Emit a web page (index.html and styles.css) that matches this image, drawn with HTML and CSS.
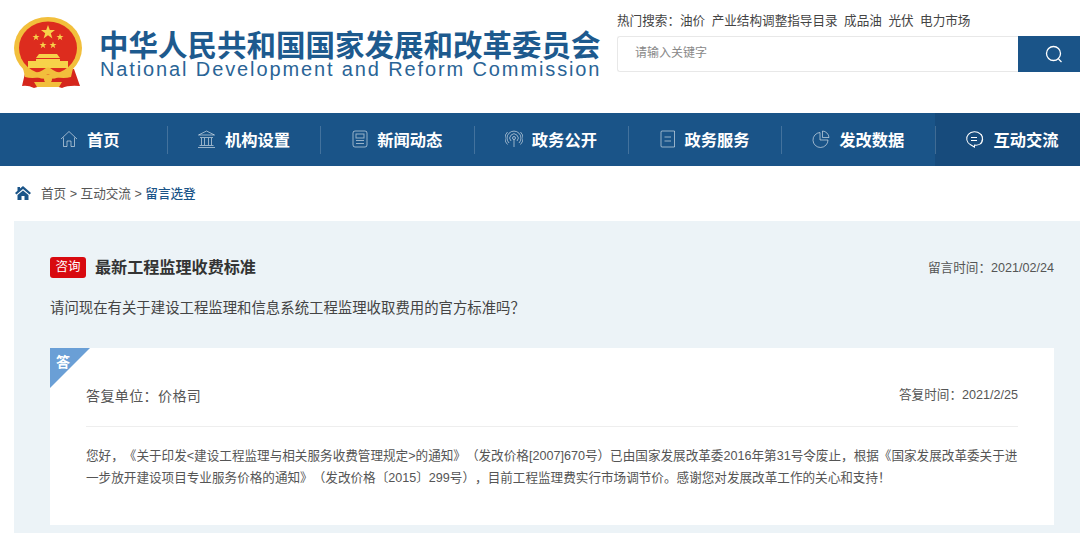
FILE: index.html
```html
<!DOCTYPE html>
<html lang="zh">
<head>
  <meta charset="UTF-8">
  <meta name="viewport" content="width=device-width, initial-scale=1">
  <title>留言选登</title>
  <link rel="stylesheet" href="styles.css">
</head>
<body>

  <!-- Header -->
  <header class="header">
    <div class="logo">
      <svg class="emblem" width="68" height="73" viewBox="0 0 68 73">
        <path d="M12 52 L8 69 Q14 68 20 71 L30 68 L38 68 L48 71 Q54 68 66 69 L60 52 Z" fill="#d5261c"/>
        <ellipse cx="34" cy="31" rx="34" ry="31" fill="#f2bf3c"/>
        <ellipse cx="34" cy="31" rx="29" ry="26.500" fill="#dd2c1e"/>
        <path d="M34 8 L35.800 13 L41 13 L36.800 16.300 L38.400 21.500 L34 18.300 L29.600 21.500 L31.200 16.300 L27 13 L32.200 13 Z" fill="#f7d24a"/>
        <path d="M22 16.500 l.9 2.500 2.600 0 -2.100 1.600 .8 2.600 -2.200 -1.600 -2.200 1.600 .8 -2.600 -2.100 -1.600 2.600 0 Z" fill="#f7d24a"/>
        <path d="M46 16.500 l.9 2.500 2.600 0 -2.100 1.600 .8 2.600 -2.200 -1.600 -2.200 1.600 .8 -2.600 -2.100 -1.600 2.600 0 Z" fill="#f7d24a"/>
        <path d="M29 24.500 l.9 2.500 2.600 0 -2.100 1.600 .8 2.600 -2.200 -1.600 -2.200 1.600 .8 -2.600 -2.100 -1.600 2.600 0 Z" fill="#f7d24a"/>
        <path d="M39 24.500 l.9 2.500 2.600 0 -2.100 1.600 .8 2.600 -2.200 -1.600 -2.200 1.600 .8 -2.600 -2.100 -1.600 2.600 0 Z" fill="#f7d24a"/>
        <path d="M25 37 H43 L46 41 H22 Z M22 42 H46 V44 H54 V51 H14 V44 H22 Z" fill="#f7d24a"/>
        <path d="M8 47 Q20 60 29 53 Q34 48 39 53 Q48 60 60 47 L57 60 Q46 63 34 57 Q22 63 11 60 Z" fill="#f2bf3c"/>
        <path d="M20 65 H48 L45 70 H23 Z" fill="#f2bf3c"/>
        <circle cx="34" cy="62" r="4" fill="#f2bf3c"/>
      </svg>
      <div class="logo-text">
        <div class="logo-cn">中华人民共和国国家发展和改革委员会</div>
        <div class="logo-en">National Development and Reform Commission</div>
      </div>
    </div>
    <div class="search-box">
      <div class="hot-words">
        <span>热门搜索：油价</span>
        <span>产业结构调整指导目录</span>
        <span>成品油</span>
        <span>光伏</span>
        <span>电力市场</span>
      </div>
      <div class="search-row">
        <div class="search-input">请输入关键字</div>
        <div class="search-btn">
          <svg width="18" height="18" viewBox="0 0 18 18" fill="none" stroke="#fff" stroke-width="1.300">
            <circle cx="8.500" cy="8.500" r="7"/>
            <path d="M13.500 14 L16.500 17"/>
          </svg>
        </div>
      </div>
    </div>
  </header>

  <!-- Nav -->
  <nav class="nav">
    <a class="nav-item">
      <svg width="18" height="18" viewBox="0 0 18 18"><path d="M1 9 L9 1.500 L17 9 M3.500 7.500 V16.500 H7 V11 H11 V16.500 H14.500 V7.500"/></svg>
      首页
    </a>
    <a class="nav-item">
      <svg width="19" height="18" viewBox="0 0 19 18"><path d="M9.500 1 L1.500 5 H17.500 Z M3 7.500 H16 M4.500 8 V15 M7.500 8 V15 M11.500 8 V15 M14.500 8 V15 M2.500 15.500 H16.500 M1 17.500 H18"/></svg>
      机构设置
    </a>
    <a class="nav-item">
      <svg width="16" height="18" viewBox="0 0 16 18"><rect x="1" y="1" width="14" height="16" rx="2"/><rect x="4" y="4" width="8" height="4"/><path d="M4 10.500 H12 M4 13.500 H12"/></svg>
      新闻动态
    </a>
    <a class="nav-item">
      <svg width="18" height="18" viewBox="0 0 18 18"><circle cx="9" cy="8" r="1.500"/><path d="M9 9.500 V17 M6 11 A4.200 4.200 0 1 1 12 11 M4 13 A7 7 0 1 1 14 13 M2.500 14.500 A8.800 8.800 0 0 1 2.500 2 M15.500 14.500 A8.800 8.800 0 0 0 15.500 2"/></svg>
      政务公开
    </a>
    <a class="nav-item">
      <svg width="16" height="18" viewBox="0 0 16 18"><path d="M14.500 1 H2 Q1 1 1 2 V16 Q1 17 2 17 H14.500 Z"/><path d="M4.500 7 H11 M4.500 11 H11"/></svg>
      政务服务
    </a>
    <a class="nav-item">
      <svg width="18" height="18" viewBox="0 0 18 18"><path d="M8 2.500 A7.500 7.500 0 1 0 16 10 H8 Z"/><path d="M10.500 1 A7 7 0 0 1 17 7.500 H10.500 Z"/></svg>
      发改数据
    </a>
    <a class="nav-item nav-active">
      <svg width="19" height="18" viewBox="0 0 19 18"><path d="M15 14 A8 7 0 1 0 6 15 L10 17 L10 15 A8 7 0 0 0 15 14 Z" transform="rotate(4 9 9)"/><path d="M6 7.500 H12 M6 10.500 H12 M16 4 Q19 9 15.500 14"/></svg>
      互动交流
    </a>
  </nav>

  <!-- Breadcrumb -->
  <div class="crumb">
    <svg width="16" height="14" viewBox="0 0 16 14">
      <path d="M8 0 L16 7 L14.500 8.500 L8 3 L1.500 8.500 L0 7 L2.500 4.800 V1 H5 V2.600 Z M8 4.500 L13.500 9 V14 H9.500 V10 H6.500 V14 H2.500 V9 Z" fill="#1a5488"/>
    </svg>
    <span>首页 &gt; 互动交流 &gt; </span><span class="crumb-now">留言选登</span>
  </div>

  <!-- Message -->
  <main class="panel">
    <div class="ask-head">
      <span class="badge">咨询</span>
      <h1 class="ask-title">最新工程监理收费标准</h1>
      <span class="ask-date">留言时间：2021/02/24</span>
    </div>
    <p class="ask-body">请问现在有关于建设工程监理和信息系统工程监理收取费用的官方标准吗？</p>

    <section class="answer">
      <div class="corner"></div>
      <span class="corner-text">答</span>
      <div class="answer-head">
        <span class="answer-unit">答复单位：价格司</span>
        <span class="answer-date">答复时间：2021/2/25</span>
      </div>
      <p class="answer-body">您好，《关于印发&lt;建设工程监理与相关服务收费管理规定&gt;的通知》（发改价格[2007]670号）已由国家发展改革委2016年第31号令废止，根据《国家发展改革委关于进一步放开建设项目专业服务价格的通知》（发改价格〔2015〕299号），目前工程监理费实行市场调节价。感谢您对发展改革工作的关心和支持！</p>
    </section>
  </main>

</body>
</html>
```

FILE: styles.css
```css
html, body {
  margin: 0;
  height: 533px;
  overflow: hidden;
}
body {
  font-family: "Liberation Sans", "Noto Sans CJK SC", sans-serif;
  background: #ffffff;
  color: #333;
  width: 1080px;
  text-spacing-trim: space-all;
}

/* HEADER */
.header {
  height: 113px;
  display: flex;
  justify-content: space-between;
}
.logo {
  display: flex;
  padding: 17px 0 0 14px;
}
.emblem {
  flex: none;
}
.logo-text {
  margin-left: 17px;
  padding-top: 14px;
}
.logo-cn {
  font-size: 29.5px;
  line-height: 30px;
  font-weight: bold;
  color: #1d5a8e;
  white-space: nowrap;
}
.logo-en {
  font-size: 20px;
  line-height: 16px;
  letter-spacing: 1.88px;
  padding-left: 1px;
  color: #2a6496;
  white-space: nowrap;
}
.search-box {
  width: 463px;
  padding-top: 13px;
}
.hot-words {
  display: flex;
  gap: 6.500px;
  font-size: 12.6px;
  line-height: 17px;
  color: #444;
  margin-bottom: 6px;
}
.search-row {
  display: flex;
  height: 36px;
}
.search-input {
  flex: 1;
  border: 1px solid #e8e8e8;
  border-right: none;
  border-radius: 3px 0 0 3px;
  padding-left: 17px;
  font-size: 12px;
  line-height: 33px;
  color: #888;
}
.search-btn {
  width: 62px;
  box-sizing: border-box;
  padding-left: 10px;
  background: #1a5488;
  display: flex;
  align-items: center;
  justify-content: center;
}

/* NAV */
.nav {
  height: 53px;
  background: #1a5488;
  display: flex;
  padding-left: 13px;
  overflow: hidden;
}
.nav-item {
  flex: none;
  width: 153.7px;
  box-sizing: border-box;
  padding-bottom: 2px;
  display: flex;
  align-items: center;
  justify-content: center;
  gap: 9px;
  font-size: 16.3px;
  font-weight: bold;
  color: #fff;
  position: relative;
}
.nav-item svg {
  fill: none;
  stroke: rgba(255, 255, 255, 0.55);
  stroke-width: 1;
}
.nav-item + .nav-item::before {
  content: "";
  position: absolute;
  left: 0;
  top: 13px;
  height: 28px;
  width: 1px;
  background: rgba(255, 255, 255, 0.18);
}
.nav-active {
  background: #174b7c;
}
.nav-active svg {
  stroke: #fff;
}

/* BREADCRUMB */
.crumb {
  height: 55px;
  box-sizing: border-box;
  padding: 0 0 2px 15px;
  display: flex;
  align-items: center;
  font-size: 12.6px;
  color: #555;
  white-space: pre;
}
.crumb svg {
  margin-right: 10px;
}
.crumb-now {
  color: #1a5488;
  font-weight: 500;
}

/* MESSAGE */
.panel {
  margin-left: 14px;
  height: 312px;
  box-sizing: border-box;
  background: #ecf3f7;
  padding: 36px 26px 0 36px;
}
.ask-head {
  display: flex;
  align-items: center;
  height: 21px;
}
.badge {
  background: #d8090f;
  color: #fff;
  font-size: 12.5px;
  line-height: 21px;
  width: 36px;
  text-align: center;
  border-radius: 3px;
}
.ask-title {
  margin: 0 0 0 9px;
  padding-bottom: 3px;
  font-size: 16.1px;
  font-weight: bold;
  color: #333;
}
.ask-date {
  margin-left: auto;
  padding-bottom: 3px;
  font-size: 12.6px;
  color: #555;
}
.ask-body {
  margin: 19px 0 0;
  font-size: 14.4px;
  line-height: 22px;
  color: #444;
}
.answer {
  position: relative;
  margin-top: 29px;
  background: #fff;
  height: 177px;
  padding: 0 36px;
}
.corner {
  position: absolute;
  left: 0;
  top: 0;
  border-top: 40px solid #6a9fd6;
  border-right: 40px solid transparent;
}
.corner-text {
  position: absolute;
  left: 6px;
  top: 3px;
  font-size: 14px;
  font-weight: bold;
  color: #fff;
}
.answer-head {
  height: 79px;
  box-sizing: border-box;
  padding-bottom: 21px;
  display: flex;
  align-items: flex-end;
  justify-content: space-between;
  border-bottom: 1px solid #eeeeee;
}
.answer-unit {
  font-size: 14px;
  letter-spacing: 0.4px;
  color: #555;
}
.answer-date {
  padding-bottom: 2px;
  font-size: 12.6px;
  color: #555;
}
.answer-body {
  margin: 18px 0 0;
  font-size: 12.6px;
  line-height: 22px;
  color: #555;
}
```
